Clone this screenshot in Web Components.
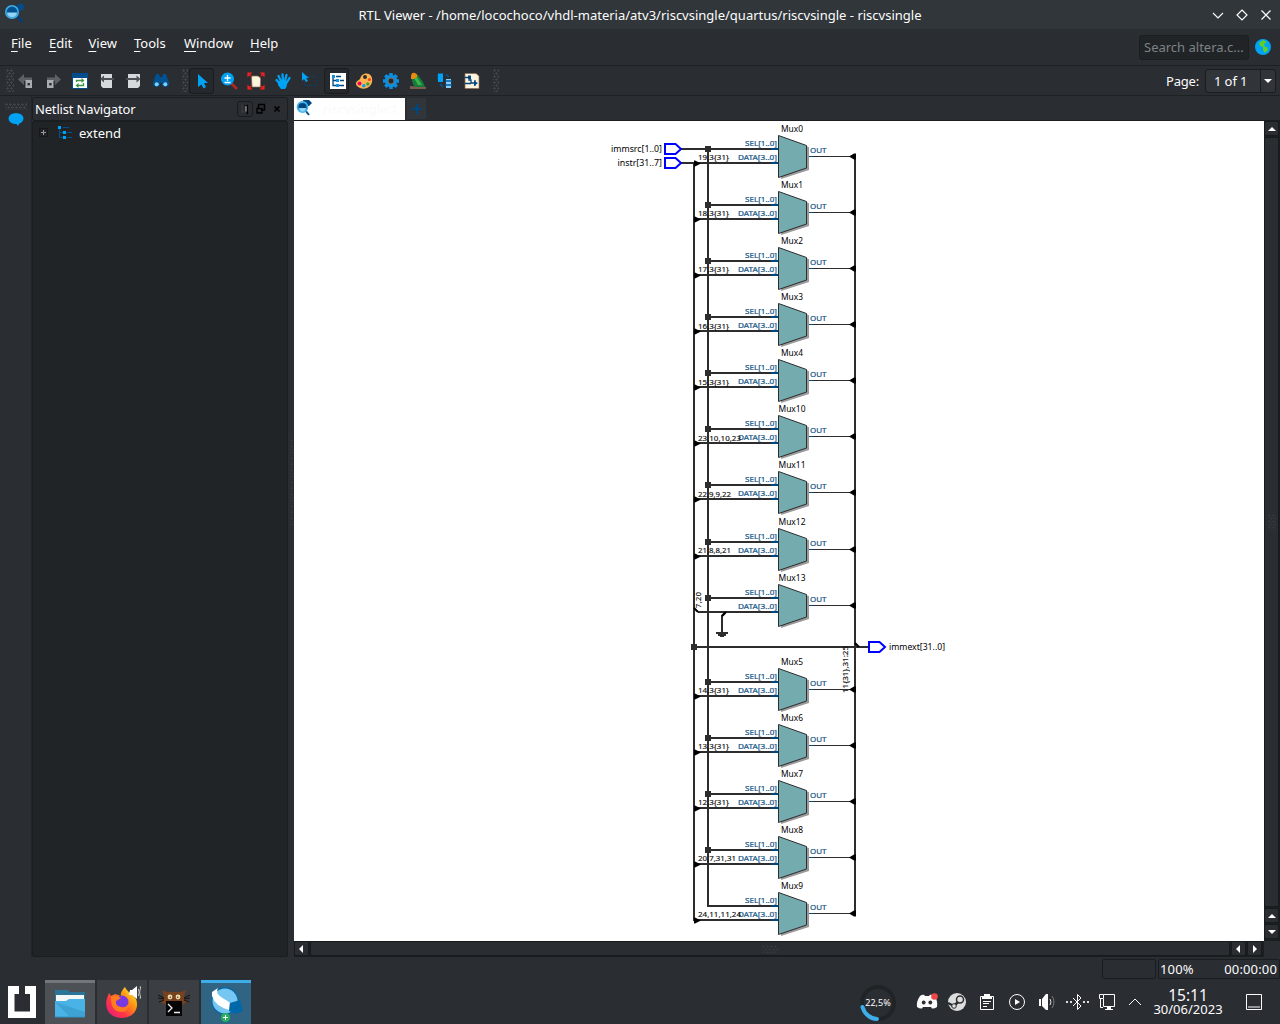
<!DOCTYPE html>
<html lang="en"><head><meta charset="utf-8"><title>RTL Viewer</title>
<style>
html,body{margin:0;height:100%;overflow:hidden;background:#2a2d32}
body{font:13px "Noto Sans",sans-serif;color:#fcfcfc}
</style></head><body><rtl-viewer></rtl-viewer>
<script>
const define=(name,css,html)=>customElements.define(name,class extends HTMLElement{
  constructor(){super();this.attachShadow({mode:'open'}).innerHTML='<style>*{box-sizing:border-box}:host{display:block;box-sizing:border-box}'+css+'</style>'+(typeof html==='function'?'':html)}
  connectedCallback(){if(typeof html==='function'&&!this.done){this.done=true;this.shadowRoot.innerHTML+=html(this)}}
});
// Each entry: [viewBox size, markup]
const icons={
app:[20,`<path d="M12 12L18 19" stroke="#003f7d" stroke-width="2.4"/><circle cx="16.500" cy="4" r="3.500" fill="#004c8c"/><circle cx="8" cy="9" r="6.200" fill="#00518f" stroke="#3daee9" stroke-width="1.600"/><path d="M3 9.500H13A5 5 0 0 1 3 9.500Z" fill="#8fd4f5"/>`],
back:[16,`<path d="M0 6.500L6 1V4.500H14V8H6V12Z" fill="#5c6166"/><path d="M7.500 7H14V15H7.500Z" fill="#a9adb0"/><rect x="9.500" y="10" width="2.400" height="2.400" fill="#2a2d32"/>`],
fwd:[16,`<path d="M16 6.500L10 1V4.500H2V8H10V12Z" fill="#5c6166"/><path d="M2 7H8.500V15H2Z" fill="#a9adb0"/><rect x="4.200" y="10" width="2.400" height="2.400" fill="#2a2d32"/>`],
refresh:[16,`<path fill="#004c8c" d="M0 0H16V16H0Z"/><path fill="#fff" d="M1 5H15V15H1Z"/><path d="M4.500 9V7.500H10M11.500 10V12.500H6" fill="none" stroke="#3f9142" stroke-width="1.300"/><path d="M9.500 5L12.500 7.500L9.500 10ZM6.500 10L3.500 12.500L6.500 15Z" fill="#3f9142"/>`],
docback:[16,`<path fill="#d6d9dc" d="M2 1H13V15H4L2 13Z"/><path fill="#4c5156" d="M1 6L5 2.500V5H15V7H5V9.500Z"/>`],
docfwd:[16,`<path fill="#d6d9dc" d="M2 1H14V13L12 15H2Z"/><path fill="#4c5156" d="M14.500 6L10.500 2.500V5H0V7H10.500V9.500Z"/>`],
binoc:[16,`<path fill="#00518f" d="M3 1H6L7 4H9L10 1H13L16 10A3.700 3.700 0 0 1 9 12V10H7V12A3.700 3.700 0 0 1 0 10Z"/><circle cx="3.700" cy="11.300" r="2" fill="#7fd0f7"/><circle cx="12.300" cy="11.300" r="2" fill="#7fd0f7"/>`],
arrow:[16,`<path fill="#00a2f3" d="M3 1L13 10H9L11 14L8.500 15.500L6.500 11.500L3 14Z"/>`],
zoom:[18,`<path d="M11 11L17 17" stroke="#b32424" stroke-width="2.500"/><circle cx="7.500" cy="7" r="6.500" fill="#00a2f3"/><path d="M4.500 6H10.500M7.500 3V9M4.500 10.500H10.500" stroke="#fff" stroke-width="1.300"/>`],
fit:[18,`<path d="M4.500 4H11L13.500 6V15H5Z" fill="#fff5dc" stroke="#8c6b57" stroke-width=".7"/><g stroke="#f02020" fill="#f02020" stroke-width="1.200"><path d="M1 1L5 5M17 1L13 5M1 17L5 13M17 17L13 13" stroke-dasharray="1.500 1"/><path d="M1 1H4L1 4ZM17 1V4L14 1ZM1 17V14L4 17ZM17 17H14L17 14Z"/></g>`],
hand:[16,`<path fill="none" stroke="#00a2f3" stroke-width="2.300" stroke-linecap="round" d="M5 11L1.500 7M6 8L3.500 3M8 8L7.500 1.500M10 8L11.500 2M11.500 10L14.500 5"/><path fill="#00a2f3" d="M3 8H12.500L11.500 14L10 16H6L3 12Z"/>`],
area:[18,`<path fill="#00a2f3" d="M1 0L8 6H5L7 9L5 10L3 7L1 9Z"/><path d="M7 4.500H15.500V13.500H3.500V10" fill="none" stroke="#044576" stroke-dasharray="1 1"/>`],
list:[18,`<path fill="#fff" d="M1 1H17V17H1Z"/><path d="M4 4V13.500H9M4 8.500H8M7 4.500H12M11 8.500H15M10 13.500H15" fill="none" stroke="#00467f" stroke-width="1.300"/><path fill="#1590df" d="M3 3H6V6H3ZM7 7H10V10H7ZM7 12H10V15H7Z"/>`],
palette:[18,`<path fill="#ffb34f" d="M9 2C15 0 18 5 17 10C15 18 6 18 2 14C-1 10 3 9 5 7C6 5 6 3 9 2Z"/><circle cx="10" cy="5" r="2" fill="#2a2d32"/><circle cx="4.500" cy="11.500" r="2" fill="#ec0065"/><circle cx="8.800" cy="13.800" r="1.800" fill="#00a2f3"/><circle cx="12.800" cy="12" r="1.700" fill="#38a43b"/><circle cx="14.500" cy="7.500" r="1.500" fill="#e42"/>`],
gear:[18,`<g stroke="#0c8dde" stroke-width="3.600"><path d="M9 1V17M1 9H17M3.300 3.300L14.700 14.700M14.700 3.300L3.300 14.700"/></g><circle cx="9" cy="9" r="6.200" fill="#0c8dde"/><circle cx="9" cy="9" r="3" fill="#25282c" stroke="#7d6d5c"/>`],
bird:[18,`<path fill="#7b5c4e" d="M1 14L17 15V17H1Z"/><path fill="#167b3c" d="M3 3L9 3L14 10L16 15H6Q2 11 3 3Z"/><path fill="#3bb44b" d="M5 6L8 5L13 13H9Z"/><path fill="#e98a13" d="M2 5Q2 0 6 1Q9 2 8 5L5 7L2 7Z"/>`],
swap:[18,`<path fill="#00a2f3" d="M2 1.500H7V10H2Z"/><path fill="#83cff5" d="M10 7H15V16H10Z"/><path d="M10 2.500L13 5M4 12L7 15M1 3.500H2M1 6.500H2M9 9H16M9 13H16" stroke="#005ba0" stroke-width="1.300"/>`],
schem:[18,`<path fill="#fff5dc" stroke="#8c6b57" stroke-width=".7" d="M2 1.500H13L16 4V16.500H2Z"/><path d="M2 5.500H6V8H8V11H12M2 11.500H8M12 8V14" fill="none" stroke="#00467f" stroke-width="1.300"/><path fill="#00467f" d="M5 3.500H8V7H5ZM11 9L15 11L11 14Z"/>`],
globe:[16,`<circle cx="8" cy="8" r="8" fill="#00a2f3"/><path fill="#5fd02a" d="M4 4L8 1L12 3L9 5L10 8H12L13 11L10 14L8 11L8 8L5 7Z"/>`],
bubble:[16,`<ellipse cx="8" cy="6.500" rx="7.500" ry="5.500" fill="#00a2f3"/><path fill="#00a2f3" d="M7 10H12L10 14Z"/>`],
tree:[16,`<path d="M2.500 2V12.500H6M2.500 7.500H6M6 2.500H12M10 7.500H15M10 12.500H15" fill="none" stroke="#00518f"/><path fill="#00a2f3" d="M1 1H4V4H1ZM6 6H9V9H6ZM6 11H9V14H6Z"/>`],
doc:[18,`<path fill="#00467f" d="M7 1H13L16 4L13 7H8Z"/><path d="M9 11L13 16" stroke="#00518f" stroke-width="2"/><circle cx="6.500" cy="8" r="5" fill="#00467f" stroke="#45b5eb" stroke-width="1.800"/><path fill="#8fd4f5" d="M3 9H10A3 3 0 0 1 3 9Z"/>`],
start:[32,`<path fill="#fff" d="M2 0H13V8H8.500V25.500H24V8H19V0H30V32H2Z"/>`],
folder:[32,`<path fill="#2b7397" d="M1 2H14L16 4H31V29H1Z"/><path fill="#f3f6f7" d="M2 7H30V15H2Z"/><path fill="#49b3e7" d="M1 13H12L15 11H31V29H1Z"/><path fill="#2f91c6" d="M1 28.500H31V29.500H1Z"/><path fill="#3797c8" opacity=".6" d="M1 14L16 29H31V24Z"/>`],
firefox:[38,`<defs><linearGradient id="f" x1="1" x2="0" y1="0" y2="1"><stop stop-color="#fff44f"/><stop offset=".35" stop-color="#ff980e"/><stop offset=".65" stop-color="#ff3647"/><stop offset="1" stop-color="#e31587"/></linearGradient></defs><path fill="url(#f)" d="M4 13L6 8L8 11L12 9L18 11C17 8 20 4 22 2C24 7 30 9 33 14C37 25 29 33 19 33C7 33 1 24 4 13Z"/><circle cx="19" cy="17" r="6.500" fill="#783ae0"/><path fill="#ff7b1c" d="M8 11Q14 10 18 13L13 16Q12 21 18 22Q24 23 26 18Q26 27 18 27Q7 26 8 11Z"/><path fill="#fff" d="M27 5H29L34 1V14L29 10H26Z"/><path d="M35.500 4Q37 7 35.500 11M37 1.500Q40 7 37 13.500" stroke="#ccc" stroke-width="1.200" fill="none"/>`],
cat:[32,`<path fill="#75411f" d="M4 2L9 4H23L28 2L26 9L29 14L24 17H8L3 14L6 9Z"/><path d="M0 7L6 10M0 10L6 11M1 14L6 12M32 7L26 10M32 10L26 11M31 14L26 12" stroke="#15120f"/><circle cx="12" cy="9" r="2.400" fill="#eed9ad"/><circle cx="20" cy="9" r="2.400" fill="#eed9ad"/><circle cx="12.300" cy="9.200" r=".8" fill="#574318"/><circle cx="19.700" cy="9.200" r=".8" fill="#574318"/><path fill="#050505" d="M8 13H24V28H8Z"/><path d="M10 16L14 20L10 24M16 24.500H22" fill="none" stroke="#eee" stroke-width="1.300"/>`],
quartus:[36,`<circle cx="17" cy="15" r="13.200" fill="#76c6f2" stroke="#0868a6" stroke-width="1.400"/><path fill="#fff" d="M4 6L10 2Q7 7 13 11Q20 15 22 17L21 24Q7 20 4 10Z"/><path fill="#0067a8" d="M22 17L32 14L35 25L28 28L21 25Z"/><circle cx="17.500" cy="31.500" r="4.500" fill="#27ae60"/><path d="M15 31.500H20M17.500 29V34" stroke="#fff"/>`],
discord:[24,`<path fill="#fafafa" d="M5 6Q7 4.500 9 4.800L10 6H14L15 4.800Q18 4.500 20 6Q23 12 22 17Q19 19 17 18.500L16 17H8L7 18.500Q5 19 2 17Q1 12 5 6Z"/><circle cx="8.700" cy="12.500" r="1.900" fill="#2a2d32"/><circle cx="15.300" cy="12.500" r="1.900" fill="#2a2d32"/><circle cx="19.500" cy="6.500" r="3.300" fill="#f04747"/>`],
steam:[24,`<circle cx="12" cy="12" r="9" fill="#ddd"/><path d="M3 13L9 16L15 10" stroke="#2a2d32" stroke-width="2.500" fill="none"/><circle cx="15" cy="9.500" r="3.500" fill="#ddd" stroke="#2a2d32" stroke-width="1.500"/><circle cx="9" cy="16" r="2.300" fill="#ddd" stroke="#2a2d32"/>`],
clip:[24,`<path d="M5.500 6.500H18.500V19.500H5.500Z" fill="none" stroke="#fcfcfc"/><path fill="#fcfcfc" d="M9 4H15V7H17V9H7V7H9Z"/><path d="M8 11.500H16M8 13.500H14M8 16.500H12" stroke="#fcfcfc"/>`],
play:[24,`<circle cx="12" cy="12" r="7.500" fill="none" stroke="#fcfcfc"/><path fill="#fcfcfc" d="M10 9L15 12L10 15Z"/>`],
vol:[24,`<path fill="#fcfcfc" d="M4 9H6V16H4ZM7 9L11 4H13V20H11L7 16Z"/><path d="M15 9Q17 12 15 15" fill="none" stroke="#ddd"/><path d="M17 6Q21 12 17 18" fill="none" stroke="#777"/>`],
bt:[24,`<path d="M8 8L16 16L12.500 19.500V4.500L16 8L8 16" fill="none" stroke="#fcfcfc"/><path fill="#ddd" d="M1 11H3V13H1ZM5 11H7V13H5ZM18 11H20V13H18ZM22 11H24V13H22Z"/>`],
net:[24,`<path d="M8.500 4.500H19.500V16.500H8.500V9M4.500 4.500H8.500V8.500H4.500ZM5.500 8.500V17.500H8" fill="none" stroke="#fcfcfc"/><path fill="#fcfcfc" d="M12 17H16V19H18V20H10V19H12Z"/>`],
up:[24,`<path d="M6 15L12 9L18 15" fill="none" stroke="#fcfcfc"/>`],
desk:[24,`<path d="M4.500 4.500H19.500V19.500H4.500ZM6 17H18" fill="none" stroke="#fcfcfc"/>`],
min:[16,`<path d="M3 6L8 11L13 6" fill="none" stroke="#fcfcfc" stroke-width="1.200"/>`],
max:[16,`<path d="M8 3L13 8L8 13L3 8Z" fill="none" stroke="#fcfcfc" stroke-width="1.200"/>`],
close:[16,`<path d="M3.500 3.500L12.500 12.500M12.500 3.500L3.500 12.500" stroke="#fcfcfc" stroke-width="1.200"/>`],
pin:[16,`<path d="M4.500 3V11M3 10.500H10" stroke="#3b4044"/><path d="M7 4H10M10 3V13" stroke="#000" stroke-width="1.500"/><path d="M8.500 4V10" stroke="#bbb"/>`],
float:[16,`<path d="M5 3.500H12M11.500 4V9H8M5.500 4V7" stroke="#000" stroke-width="1.500" fill="none"/><path d="M4 7.500H9V12H4Z" stroke="#000" fill="none" stroke-width="1.300"/>`],
xs:[16,`<path d="M5.500 5.500L10.500 10.500M10.500 5.500L5.500 10.500" stroke="#000" stroke-width="1.700"/>`],
tu:[14,`<path d="M3 9L7 5L11 9Z" fill="#fff"/>`],td:[14,`<path d="M3 5L7 9L11 5Z" fill="#fff"/>`],
tl:[14,`<path d="M8 3L4 7L8 11Z" fill="#fff"/>`],tr:[14,`<path d="M5 3L9 7L5 11Z" fill="#fff"/>`]
};
define('ui-icon','svg{display:block}',e=>{const n=e.getAttribute('name'),[v,m]=icons[n],s=e.getAttribute('size')||v;return `<svg width="${s}" height="${s}" viewBox="0 0 ${v} ${v}">${m}</svg>`});
define('app-titlebar',':host{height:29px;background:#31363b;display:grid;grid-template-columns:80px 1fr 80px;align-items:center}ui-icon{margin:-3px 0 0 4px}.t{text-align:center;white-space:pre}.b{display:flex;gap:8px;justify-content:flex-end;padding-right:6px}.b ui-icon{margin:0}',
`<ui-icon name="app"></ui-icon><div class="t"><slot></slot></div><div class="b"><ui-icon name="min"></ui-icon><ui-icon name="max"></ui-icon><ui-icon name="close"></ui-icon></div>`);
define('menu-entry','div::first-letter{text-decoration:underline;text-underline-offset:3px}',e=>`<div>${e.getAttribute('label')}</div>`);
define('app-menubar',':host{height:36px;display:flex;padding:0 9px 0 11px}.m{display:flex;padding-top:5px;flex:1}.s{margin-top:6px;width:110px;height:25px;border:1px solid #1c1f22;border-radius:3px;background:#202427;color:#7e8285;padding:2px 4px;white-space:nowrap}ui-icon{margin:10px 0 0 6px}',
`<div class="m">${[['File',38],['Edit',39.5],['View',45.5],['Tools',50],['Window',66],['Help',40]].map(([l,w])=>`<menu-entry style="width:${w}px" label="${l}"></menu-entry>`).join('')}</div><div class="s">Search altera.c...</div><ui-icon name="globe"></ui-icon>`);
define('grip-dots',':host{width:8px;height:23px;flex:none}i{display:block;height:100%;opacity:.5;background:radial-gradient(circle at 1.500px 1.500px,#55585c 1px,transparent 1.300px) 0 0/4px 6px,radial-gradient(circle at 1.500px 1.500px,#55585c 1px,transparent 1.300px) 2px 3px/4px 6px}','<i></i>');
define('tool-button',':host{width:27px;height:26px;display:flex;align-items:center;justify-content:center;border:1px solid transparent;flex:none}:host([on]){width:25px;margin:0 1px;padding-left:2px;border-color:#191c1e;border-radius:3px;background:#25282c}',e=>`<ui-icon name="${e.getAttribute('icon')}"></ui-icon>`);
define('app-toolbar',':host{height:31px;border-top:1px solid #1e2124;border-bottom:1px solid #1e2124;display:flex;align-items:center;padding:0 4px 0 6px}.f{flex:1}.g{display:flex}.c{display:flex;height:24px;width:71px;margin-left:6px;border:1px solid #1a1d1f;border-radius:3px;background:#31353a}.c b{font-weight:400;width:55px;padding:2px 0 0 8px;border-right:1px solid #1a1d1f;letter-spacing:-.1px}.c ui-icon{margin:4px 0 0 0}.l{letter-spacing:-.2px}',
`<grip-dots></grip-dots><div class="g" style="margin:0 6px 0 -2px">${['back','fwd','refresh','docback','docfwd','binoc'].map(i=>`<tool-button icon="${i}"></tool-button>`).join('')}</div><grip-dots style="margin-left:2px;width:6px"></grip-dots><div class="g">${['arrow','zoom','fit','hand','area','list','palette','gear','bird','swap','schem'].map(i=>`<tool-button icon="${i}" ${i=='arrow'||i=='list'?'on':''}></tool-button>`).join('')}</div><grip-dots style="margin-left:8px;width:6px"></grip-dots><div class="f"></div><span class="l">Page:</span><div class="c"><b>1 of 1</b><ui-icon name="td" size="14"></ui-icon></div>`);
define('netlist-dock',':host{width:256px;display:flex;flex-direction:column;padding-top:1px}.h{height:24px;border:1px solid #1b1e20;border-radius:3px;display:flex;align-items:center;padding:0 2px;white-space:nowrap;letter-spacing:-.17px}.h span{flex:1}.p{border:1px solid #191c1e;border-radius:3px;height:16px;overflow:hidden;width:16px}.t{flex:1;background:#202427;border:1px solid #1a1d1f;border-radius:2px;padding:1px 6px}.r{display:flex;align-items:center;height:19px}.x{width:9px;height:9px;border:1px solid #15181a;background:linear-gradient(#999,#999) 1px 3px/5px 1px no-repeat,linear-gradient(#999,#999) 3px 1px/1px 5px no-repeat;margin-right:9px}.r ui-icon{margin-right:6px}',
`<div class="h"><span>Netlist Navigator</span><div class="p"><ui-icon name="pin" size="15"></ui-icon></div><ui-icon name="float"></ui-icon><ui-icon name="xs"></ui-icon></div><div class="t"><div class="r"><div class="x"></div><ui-icon name="tree"></ui-icon>extend</div></div>`);
define('scroll-bar',`:host{display:flex;background:#1b1e20;gap:1px;padding:0 2px 1px 0;flex:none}:host([vertical]){flex-direction:column;padding:0 1px 2px 0}div{background:#2a2d32;border:1px solid #181b1d;border-radius:2px;display:flex;align-items:center;justify-content:center}.a{width:15px;height:15px}.s{flex:1;min-width:14px;min-height:14px}.s grip-dots{width:16px;height:8px;opacity:.45}:host([vertical]) .s grip-dots{width:8px;height:16px}`,
e=>{const v=e.hasAttribute('vertical'),a=n=>`<div class="a"><ui-icon name="${n}"></ui-icon></div>`;return a(v?'tu':'tl')+'<div class="s"><grip-dots></grip-dots></div>'+a(v?'tu':'tl')+a(v?'td':'tr')});
// Netlist drawing: [name, centre y, bus slice label]
const mux=[['Mux0',156,'19,3{31}'],['Mux1',212,'18,3{31}'],['Mux2',268,'17,3{31}'],['Mux3',324,'16,3{31}'],['Mux4',380,'15,3{31}'],['Mux10',436,'23,10,10,23'],['Mux11',492,'22,9,9,22'],['Mux12',549,'21,8,8,21'],['Mux13',605,''],['Mux5',689,'14,3{31}'],['Mux6',745,'13,3{31}'],['Mux7',801,'12,3{31}'],['Mux8',857,'20,7,31,31'],['Mux9',913,'24,11,11,24']];
const tw={8:31,9:33,10:38,11:43};
const W='stroke="#2d2d2d" stroke-width="2" fill="none"';
const fitted='lengthAdjust="spacingAndGlyphs"';
define('netlist-schematic',':host{background:#fff;overflow:hidden}svg{display:block}text{font-family:"Noto Sans",sans-serif}.n{font-size:9px;fill:#000}.s{font-size:7.400px;fill:#111;stroke:#111;stroke-width:.15px}.p{font-size:7.400px;fill:#135486;stroke:#135486;stroke-width:.2px}',
`<svg width="970" height="820" viewBox="294 121 970 820">
<path ${W} d="M681 149H708V906M681 163H694V921M855 156V914M694 647H868M722 634V616L725 613"/>
${mux.map(([n,y,l])=>`<g><path ${W} d="M${n=='Mux9'?707:708} ${y-7}H778M${n=='Mux13'?698:694} ${y+7}H778"/><path d="M771 ${y-7}H778M771 ${y+7}H778" stroke="#00467f" stroke-width="2"/><path d="M811 ${y+.5}H852" stroke="#2d2d2d"/><path d="M808 ${y+.5}H813" stroke="#00467f"/><path fill="#999" d="M781 ${y-17}L809 ${y-9}V${y+14}L781 ${y+23}Z"/><path fill="#73abae" stroke="#2d2d2d" d="M778.500 ${y-20.5}L806.500 ${y-10.5}V${y+12}L778.500 ${y+21.5}Z"/>${n=='Mux9'?'':`<path fill="#2d2d2d" d="M705 ${y-10}h6v6h-6Z"/>`}${n=='Mux13'?'':`<path fill="#000" d="M694 ${y+4.5}h1l6 3-6 3h-1Z"/>`}<path fill="#000" d="M856 ${y-2.5}h-2l-5 3 5 3h2Z"/><text class="n" x="792" y="${y-24}" text-anchor="middle" textLength="${n.length>4?27:22}" ${fitted}>${n}</text><text class="p" x="745" y="${y-10}" textLength="32" ${fitted}>SEL[1..0]</text><text class="p" x="738" y="${y+4}" textLength="39" ${fitted}>DATA[3..0]</text><text class="p" x="810" y="${y-3}" textLength="16.500" ${fitted}>OUT</text>${l?`<text class="s" x="698" y="${y+(y>300&&y<500?5:4)}" textLength="${tw[l.length]}" ${fitted}>${l}</text>`:''}</g>`).join('')}
<path fill="#2d2d2d" d="M691 644h6v6h-6ZM716 632h12v2h-12ZM718 634h8v2h-8ZM720 636h4v1h-4Z"/><path d="M694 608L698 612M855 643L859 647M722 616L726 612" stroke="#000" stroke-width="2"/>
<g fill="#fff" stroke="#00f" stroke-width="2"><path d="M665 144H675.500L681 149L675.500 154H665Z"/><path d="M665 158H675.500L681 163L675.500 168H665Z"/><path d="M869 642H879.500L885 647L879.500 652H869Z"/></g>
<g class="n"><text x="611" y="152" textLength="51" ${fitted}>immsrc[1..0]</text><text x="617.500" y="166" textLength="44.500" ${fitted}>instr[31..7]</text><text x="889" y="650" textLength="56" ${fitted}>immext[31..0]</text></g>
<text class="s" transform="translate(701 608)rotate(-90)" textLength="16">7,20</text><text class="s" transform="translate(847.500 693)rotate(-90)" textLength="47" ${fitted}>11{31},31:25</text></svg>`);
define('doc-tabs',':host{height:25px;display:flex;padding-top:2px;border-bottom:1px solid #1b1e20}.t{width:111px;height:22px;background:#fff;color:#fafafa;display:flex;align-items:center;padding-left:2px;gap:9px}.t ui-icon{margin-top:-3px}.a{width:19px;height:21px;margin:0 0 0 2px;background:#31363b;display:grid;place-items:center}',
`<div class="t"><ui-icon name="doc"></ui-icon><span>riscvsingle:1</span></div><div class="a"><svg width="12" height="12"><path d="M6 1V11M1 6H11" stroke="#00467f" stroke-width="2"/></svg></div>`);
define('status-bar',':host{height:23px;display:flex;justify-content:flex-end;gap:2px;padding-top:2px;white-space:nowrap}div{height:20px;border:1px solid #1a1d1f;border-radius:2px}.e{width:54px}.v{width:122px;display:flex;justify-content:space-between;padding:0 2px 0 1px;line-height:18px;letter-spacing:.15px}',
`<div class="e"></div><div class="v"><span>100%</span><span>00:00:00</span></div>`);
define('task-button',':host{width:50px;height:44px;background:#3b3e43;border-top:3px solid #3b3e43;display:flex;align-items:center;justify-content:center;flex:none}',e=>`<ui-icon name="${e.getAttribute('icon')}"></ui-icon>`);
define('task-bar',`:host{height:44px;display:flex}.l{display:flex;gap:2px;flex:1}.l>ui-icon{margin:6px 1px 0 6px;width:36px}.w{background:#4d5054;border-color:#73777a}.q{background:#316482;border-color:#3daee9}.r{display:flex;align-items:center}.r>ui-icon{width:30px;padding-left:3px}.g{width:36px;height:36px;margin:1px 16px 0 0;display:grid;place-items:center;font-size:9px}.g>*{grid-area:1/1}.c{width:76px;text-align:center;line-height:13px;margin-right:13px;white-space:nowrap}.c b{font-weight:400;font-size:15.500px;display:block;line-height:15px}`,
`<div class="l"><ui-icon name="start"></ui-icon><task-button class="w" icon="folder"></task-button><task-button icon="firefox"></task-button><task-button icon="cat"></task-button><task-button class="q" icon="quartus"></task-button></div><div class="r"><div class="g"><svg width="36" height="36"><circle cx="18" cy="18" r="16" fill="none" stroke="#202427" stroke-width="4"/><path d="M2.500 22A16 16 0 0 0 17 34" fill="none" stroke="#3daee9" stroke-width="4" stroke-linecap="round"/></svg><span>22,5%</span></div>${['discord','steam','clip','play','vol','bt','net','up'].map(i=>`<ui-icon name="${i}"${i=='up'?' style="width:28px;padding-left:1px"':''}></ui-icon>`).join('')}<div class="c"><b>15:11</b>30/06/2023</div><ui-icon name="desk" style="width:41px"></ui-icon></div>`);
define('rtl-viewer',':host{width:1280px;height:1024px;display:flex;flex-direction:column;background:#2a2d32;overflow:hidden}.m{height:861px;display:flex}.s{width:32px;padding:7px 0 0 5px;border-right:1px solid #222528}.s grip-dots{width:22px;height:7px}.s ui-icon{margin:2px 0 0 3px}.k{width:6px;display:flex;align-items:center;padding-left:2px}.k grip-dots{width:3px;height:86px;margin-top:-90px;opacity:.45}.d{flex:1;display:flex;flex-direction:column;min-width:0}.c{display:flex;flex:1}netlist-schematic{width:970px;height:820px}.c scroll-bar{width:16px;height:820px}.h{height:16px;width:970px}',
`<app-titlebar>RTL Viewer - /home/locochoco/vhdl-materia/atv3/riscvsingle/quartus/riscvsingle - riscvsingle</app-titlebar><app-menubar></app-menubar><app-toolbar></app-toolbar><div class="m"><div class="s"><grip-dots></grip-dots><ui-icon name="bubble"></ui-icon></div><netlist-dock></netlist-dock><div class="k"><grip-dots></grip-dots></div><div class="d"><doc-tabs></doc-tabs><div class="c"><netlist-schematic></netlist-schematic><scroll-bar vertical></scroll-bar></div><scroll-bar class="h"></scroll-bar></div></div><status-bar></status-bar><task-bar></task-bar>`);
</script></body></html>
